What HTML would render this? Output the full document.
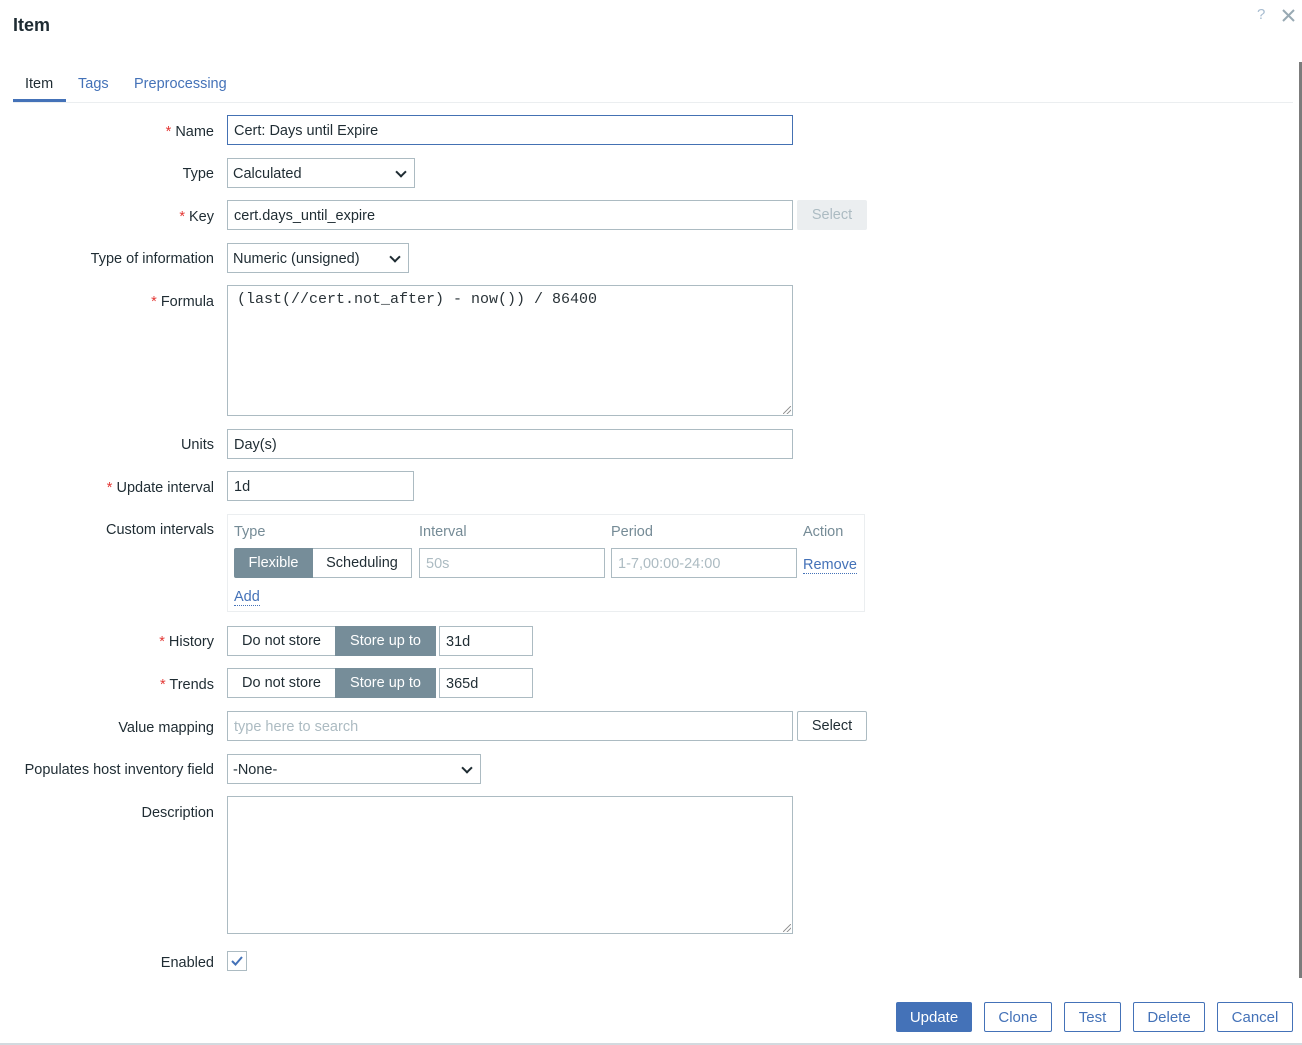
<!DOCTYPE html>
<html><head><meta charset="utf-8"><style>
*{box-sizing:border-box;margin:0;padding:0}
body{width:1302px;height:1045px;background:#fff;font-family:"Liberation Sans",Arial,sans-serif;font-size:14.5px;color:#1f2c33;position:relative;overflow:hidden}
.a{position:absolute}
.lbl{position:absolute;right:1088px;text-align:right;white-space:nowrap;line-height:18px;margin-top:1px}
.req:before{content:"* ";color:#e33734}
.in{position:absolute;border:1px solid #acbbc2;background:#fff;height:30px;line-height:30px;padding-left:6px;white-space:nowrap}
.sel:after{content:"";position:absolute;right:9px;top:9px;width:6px;height:6px;border-right:2px solid #1f2c33;border-bottom:2px solid #1f2c33;transform:rotate(45deg)}
.btn{position:absolute;height:30px;line-height:29px;text-align:center;border:1px solid #4472b8;color:#4472b8;border-radius:2px;background:#fff;font-size:15px}
.seg{position:absolute;height:30px;line-height:29px;text-align:center;border:1px solid #acbbc2;background:#fff}
.on{background:#768d99;color:#fff;border-color:#768d99}
.link{color:#4472b8;border-bottom:1px dotted #4472b8;line-height:16px}
.gray{color:#758b96}
.grip{position:absolute;right:1px;bottom:1px;width:8px;height:8px;background:linear-gradient(135deg,transparent 45%,#999 45%,#999 55%,transparent 55%,transparent 70%,#999 70%,#999 80%,transparent 80%)}
</style></head><body>
<div class="a" style="left:13px;top:15px;font-size:18px;font-weight:bold;color:#1f2c33">Item</div>
<div class="a" style="left:1257px;top:6px;color:#a7bcd0;font-size:15px">?</div>
<svg class="a" style="left:1282px;top:9px" width="13" height="13"><path d="M1 1L12 12M12 1L1 12" stroke="#98a9b3" stroke-width="2"/></svg>
<div class="a" style="left:1299px;top:62px;width:3px;height:916px;background:#7c7c7c"></div>

<div class="a" style="left:25px;top:76px">Item</div>
<div class="a" style="left:78px;top:76px;color:#4472b8">Tags</div>
<div class="a" style="left:134px;top:76px;color:#4472b8">Preprocessing</div>
<div class="a" style="left:13px;top:102px;width:1280px;height:1px;background:#ebeef0"></div>
<div class="a" style="left:13px;top:99px;width:53px;height:3px;background:#4472b8"></div>

<div class="lbl req" style="top:122px">Name</div>
<div class="in" style="left:227px;top:115px;width:566px;border-color:#4471b3">Cert: Days until Expire</div>
<div class="lbl" style="top:164px">Type</div>
<div class="in sel" style="left:227px;top:158px;width:188px;padding-left:5px">Calculated</div>
<div class="lbl req" style="top:207px">Key</div>
<div class="in" style="left:227px;top:200px;width:566px">cert.days_until_expire</div>
<div class="seg" style="left:797px;top:200px;width:70px;background:#ebeef0;color:#acbbc2;border-color:#ebeef0;border-radius:2px">Select</div>
<div class="lbl" style="top:249px">Type of information</div>
<div class="in sel" style="left:227px;top:243px;width:182px;padding-left:5px">Numeric (unsigned)</div>
<div class="lbl req" style="top:292px">Formula</div>
<div class="in" style="left:227px;top:285px;width:566px;height:131px;line-height:27px;font-family:'Liberation Mono',monospace;font-size:15px;padding-left:9px;color:#2a3338">(last(//cert.not_after) - now()) / 86400<div class="grip"></div></div>
<div class="lbl" style="top:435px">Units</div>
<div class="in" style="left:227px;top:429px;width:566px">Day(s)</div>
<div class="lbl req" style="top:478px">Update interval</div>
<div class="in" style="left:227px;top:471px;width:187px">1d</div>
<div class="lbl" style="top:520px">Custom intervals</div>
<div class="a" style="left:227px;top:514px;width:638px;height:98px;border:1px solid #ebeef0"></div>
<div class="a gray" style="left:234px;top:524px">Type</div>
<div class="a gray" style="left:419px;top:524px">Interval</div>
<div class="a gray" style="left:611px;top:524px">Period</div>
<div class="a gray" style="left:803px;top:524px">Action</div>
<div class="seg on" style="left:234px;top:548px;width:79px;border-radius:2px 0 0 2px">Flexible</div>
<div class="seg" style="left:313px;top:548px;width:99px;border-left:0">Scheduling</div>
<div class="in" style="left:419px;top:548px;width:186px;color:#acbbc2">50s</div>
<div class="in" style="left:611px;top:548px;width:186px;color:#acbbc2">1-7,00:00-24:00</div>
<div class="a link" style="left:803px;top:557px">Remove</div>
<div class="a link" style="left:234px;top:589px">Add</div>
<div class="lbl req" style="top:632px">History</div>
<div class="seg" style="left:227px;top:626px;width:108px;border-right:0">Do not store</div>
<div class="seg on" style="left:335px;top:626px;width:101px">Store up to</div>
<div class="in" style="left:439px;top:626px;width:94px">31d</div>
<div class="lbl req" style="top:675px">Trends</div>
<div class="seg" style="left:227px;top:668px;width:108px;border-right:0">Do not store</div>
<div class="seg on" style="left:335px;top:668px;width:101px">Store up to</div>
<div class="in" style="left:439px;top:668px;width:94px">365d</div>
<div class="lbl" style="top:718px">Value mapping</div>
<div class="in" style="left:227px;top:711px;width:566px;color:#acbbc2">type here to search</div>
<div class="seg" style="left:797px;top:711px;width:70px;border-radius:2px">Select</div>
<div class="lbl" style="top:760px">Populates host inventory field</div>
<div class="in sel" style="left:227px;top:754px;width:254px;padding-left:5px">-None-</div>
<div class="lbl" style="top:803px">Description</div>
<div class="in" style="left:227px;top:796px;width:566px;height:138px"><div class="grip"></div></div>
<div class="lbl" style="top:953px">Enabled</div>
<div class="a" style="left:227px;top:951px;width:20px;height:20px;border:1px solid #acbbc2"></div>
<svg class="a" style="left:230px;top:954px" width="14" height="14"><path d="M2 7L5.5 10.5L12 3" stroke="#4472b8" stroke-width="2" fill="none"/></svg>

<div class="btn" style="left:896px;top:1002px;width:76px;background:#4472b8;color:#fff">Update</div>
<div class="btn" style="left:984px;top:1002px;width:68px">Clone</div>
<div class="btn" style="left:1064px;top:1002px;width:57px">Test</div>
<div class="btn" style="left:1133px;top:1002px;width:72px">Delete</div>
<div class="btn" style="left:1217px;top:1002px;width:76px">Cancel</div>
<div class="a" style="left:0;top:1043px;width:1302px;height:2px;background:#d3dadf"></div>
</body></html>
